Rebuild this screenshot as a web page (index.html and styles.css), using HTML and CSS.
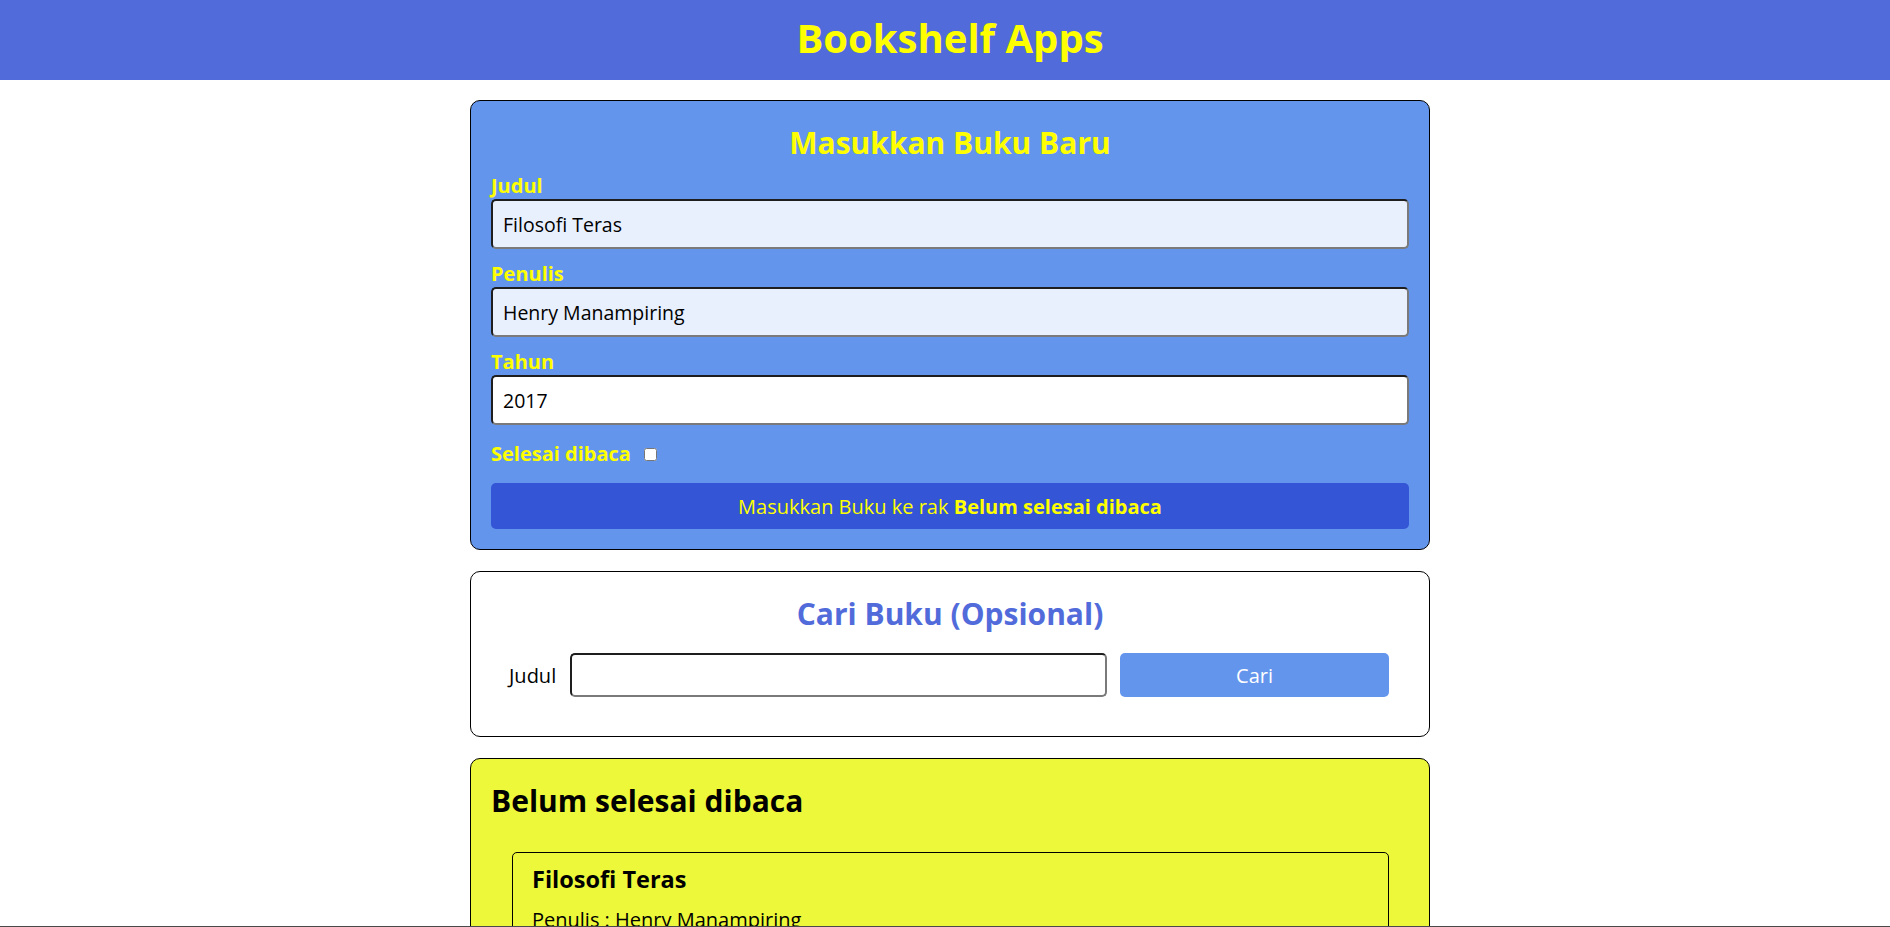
FILE: index.html
```html
<!DOCTYPE html>
<html lang="id">
<head>
<meta charset="utf-8">
<title>Bookshelf Apps</title>
<link rel="stylesheet" href="styles.css">
</head>
<body>
<header class="app-header">
  <h1 class="app-title">Bookshelf Apps</h1>
</header>
<main class="main">
  <section class="card card-input">
    <h2 class="card-title">Masukkan Buku Baru</h2>
    <form class="book-form">
      <div class="field">
        <label class="field-label">Judul</label>
        <input class="field-input autofilled" type="text" value="Filosofi Teras">
      </div>
      <div class="field">
        <label class="field-label">Penulis</label>
        <input class="field-input autofilled" type="text" value="Henry Manampiring">
      </div>
      <div class="field">
        <label class="field-label">Tahun</label>
        <input class="field-input" type="text" value="2017">
      </div>
      <div class="check-row">
        <label class="field-label check-label">Selesai dibaca</label>
        <input class="check-box" type="checkbox">
      </div>
      <button class="submit-btn" type="button">Masukkan Buku ke rak <span class="submit-strong">Belum selesai dibaca</span></button>
    </form>
  </section>

  <section class="card card-search">
    <h2 class="card-title search-title">Cari Buku (Opsional)</h2>
    <form class="search-row">
      <label class="search-label">Judul</label>
      <input class="search-input" type="text">
      <button class="search-btn" type="button">Cari</button>
    </form>
  </section>

  <section class="card card-shelf">
    <h2 class="shelf-title">Belum selesai dibaca</h2>
    <article class="book-item">
      <h3 class="book-title">Filosofi Teras</h3>
      <p class="book-meta">Penulis : Henry Manampiring</p>
      <p class="book-meta">Tahun : 2017</p>
    </article>
  </section>
</main>
<div class="screen-edge"></div>
</body>
</html>
```

FILE: styles.css
```css
html, body {
  margin: 0;
  padding: 0;
}

body {
  font-family: "Open Sans", "Noto Sans", sans-serif;
  background: #ffffff;
  color: #000;
}

.app-header {
  background: #526bdb;
  height: 80px;
  box-sizing: border-box;
  display: flex;
  align-items: center;
  justify-content: center;
  padding: 0 0 5px 10px;
}

.app-title {
  margin: 0;
  color: #ffff00;
  font-size: 40px;
  font-weight: 700;
  line-height: 1;
}

.main {
  width: 960px;
  box-sizing: border-box;
  margin: 20px 0 0 calc(50% - 475px);
}

.card {
  border: 1px solid #000;
  border-radius: 10px;
  padding: 20px;
  margin-bottom: 21px;
}

.card-input {
  background: #6495ed;
}

.card-title {
  margin: 0;
  text-align: center;
  color: #ffff00;
  font-size: 30px;
  font-weight: 700;
  line-height: 44px;
}

.book-form {
  display: flex;
  flex-direction: column;
}

.field {
  display: flex;
  flex-direction: column;
  margin-top: 7px;
}

.field + .field {
  margin-top: 11px;
}

.field-label {
  color: #ffff00;
  font-size: 20px;
  font-weight: 700;
  line-height: 27px;
}

.field-input {
  height: 50px;
  box-sizing: border-box;
  border: 2px solid;
  border-color: #1e1e1e #7a7a7a #7a7a7a #1e1e1e;
  border-radius: 5px;
  padding: 0 10px;
  font-family: "Open Sans", sans-serif;
  font-size: 19.5px;
  color: #000;
  background: #ffffff;
  outline: none;
}

.field-input.autofilled {
  background: #e8f0fe;
}

.check-row {
  display: flex;
  align-items: center;
  margin: 15px 0 16px;
  height: 27px;
}

.check-label {
  margin: 0 9px 0 0;
}

.check-box {
  width: 13px;
  height: 13px;
  margin: 1px 0 0 4px;
}

.submit-btn {
  height: 46px;
  border: none;
  border-radius: 5px;
  background: #3355d6;
  color: #ffff00;
  font-family: "Open Sans", sans-serif;
  font-size: 20px;
  font-weight: 400;
  padding: 0;
}

.submit-strong {
  font-weight: 700;
}

.card-search {
  background: #ffffff;
}

.search-title {
  color: #526bdb;
}

.search-row {
  display: flex;
  align-items: center;
  margin: 17px 0 19px;
  padding: 0 20px 0 18px;
}

.search-label {
  font-size: 20px;
  line-height: 27px;
  color: #000;
  margin-right: 14px;
}

.search-input {
  flex: 1;
  height: 44px;
  box-sizing: border-box;
  border: 2px solid;
  border-color: #1e1e1e #7a7a7a #7a7a7a #1e1e1e;
  border-radius: 5px;
  padding: 0 10px;
  font-family: "Open Sans", sans-serif;
  font-size: 19px;
  background: #fff;
  outline: none;
}

.search-btn {
  width: 269px;
  height: 44px;
  margin-left: 13px;
  border: none;
  border-radius: 5px;
  background: #6495ed;
  color: #ffffff;
  font-family: "Open Sans", sans-serif;
  font-size: 20px;
  padding: 0;
}

.card-shelf {
  background: #edf83a;
}

.shelf-title {
  margin: 0 0 29px;
  font-size: 30px;
  font-weight: 700;
  line-height: 44px;
  color: #000;
}

.book-item {
  border: 1px solid #000;
  border-radius: 5px;
  margin: 0 20px 20px 21px;
  padding: 0 19px 10px;
}

.book-title {
  margin: 0;
  padding-top: 10px;
  font-size: 23.5px;
  font-weight: 700;
  line-height: 33px;
}

.book-meta {
  margin: 10px 0 0;
  font-size: 20px;
  line-height: 27px;
}

.screen-edge {
  position: fixed;
  left: 0;
  right: 0;
  bottom: 0;
  height: 1px;
  background: #4a4a4a;
}
```
